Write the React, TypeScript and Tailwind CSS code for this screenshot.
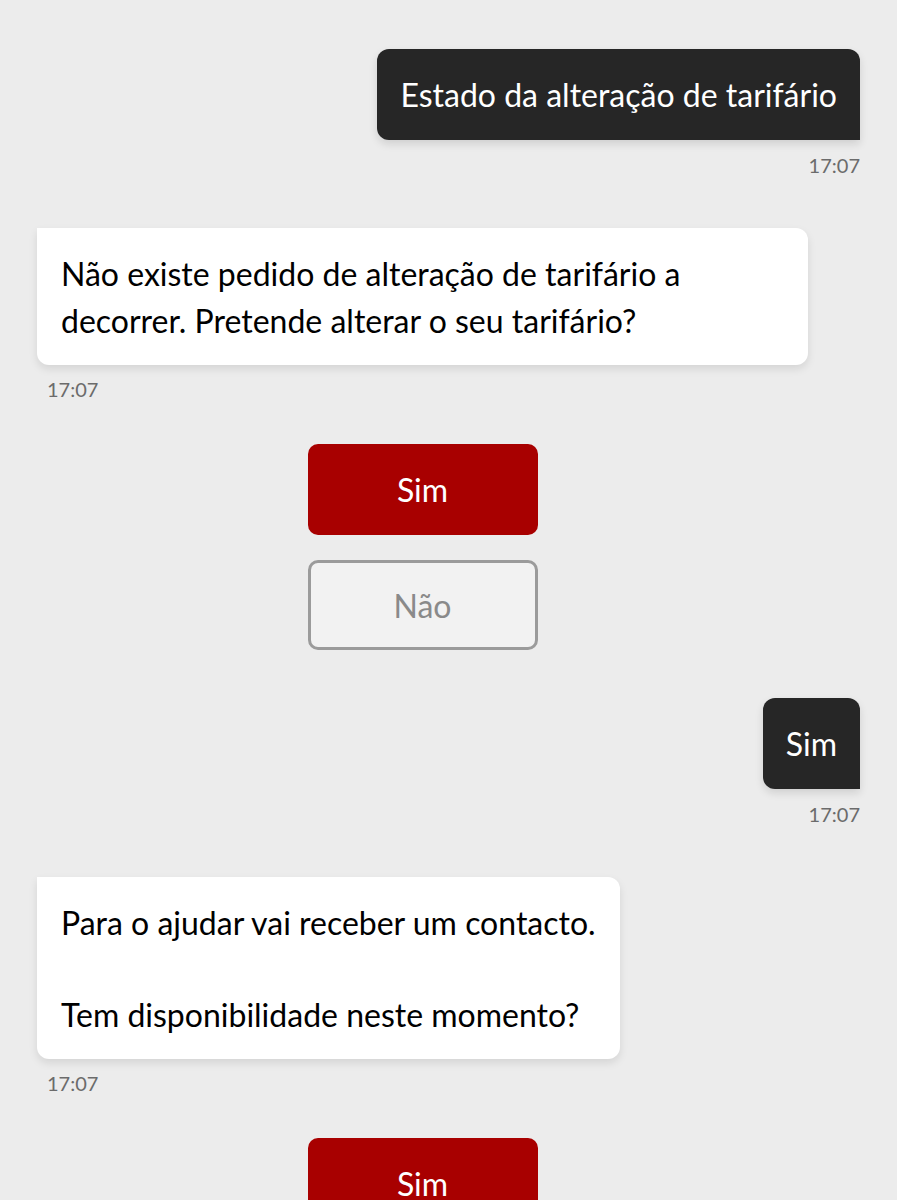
const font = { fontFamily: '"Lato", "Noto Sans", sans-serif' }

function UserBubble({ text }: { text: string }) {
  return (
    <div className="flex flex-col items-end">
      <div className="bg-[#262626] text-white text-[32px] leading-[37px] px-[23px] py-[27px] rounded-tl-[12px] rounded-tr-[12px] rounded-bl-[12px] shadow-[0_4px_8px_rgba(0,0,0,0.12)]">
        {text}
      </div>
      <div className="mt-[13px] text-[20px] leading-[24px] text-[#6b6b6b]">17:07</div>
    </div>
  )
}

function BotBubble({ lines }: { lines: string[] }) {
  return (
    <div className="flex flex-col items-start">
      <div className="bg-white text-black text-[32px] leading-[47px] px-[24px] py-[21.5px] rounded-tr-[12px] rounded-br-[12px] rounded-bl-[12px] shadow-[0_4px_8px_rgba(0,0,0,0.1)] max-w-[771px]">
        {lines.map((l, i) => (
          <div key={i} className={l === '' ? 'h-[45px]' : ''}>{l}</div>
        ))}
      </div>
      <div className="mt-[12px] ml-[10px] text-[20px] leading-[24px] text-[#6b6b6b]">17:07</div>
    </div>
  )
}

function QuickReplies({ options }: { options: string[] }) {
  return (
    <div className="w-[771px] flex flex-col items-center gap-[25px]">
      {options.map((o, i) =>
        i === 0 ? (
          <button key={o} className="w-[230px] h-[91px] rounded-[10px] bg-[#a80000] text-white text-[32px] leading-[37px]">
            {o}
          </button>
        ) : (
          <button key={o} className="w-[230px] h-[90px] rounded-[10px] bg-[#f2f2f2] border-[3px] border-[#9b9b9b] text-[#8a8a8a] text-[32px] leading-[37px]">
            {o}
          </button>
        )
      )}
    </div>
  )
}

export default function App() {
  return (
    <div style={font} className="h-[1200px] overflow-hidden bg-[#ececec] px-[37px] pt-[49px]">
      <UserBubble text="Estado da alteração de tarifário" />
      <div className="mt-[51px]">
        <BotBubble lines={['Não existe pedido de alteração de tarifário a decorrer. Pretende alterar o seu tarifário?']} />
      </div>
      <div className="mt-[43px]">
        <QuickReplies options={['Sim', 'Não']} />
      </div>
      <div className="mt-[48px]">
        <UserBubble text="Sim" />
      </div>
      <div className="mt-[51px]">
        <BotBubble lines={['Para o ajudar vai receber um contacto.', '', 'Tem disponibilidade neste momento?']} />
      </div>
      <div className="mt-[43px]">
        <QuickReplies options={['Sim', 'Não']} />
      </div>
    </div>
  )
}
